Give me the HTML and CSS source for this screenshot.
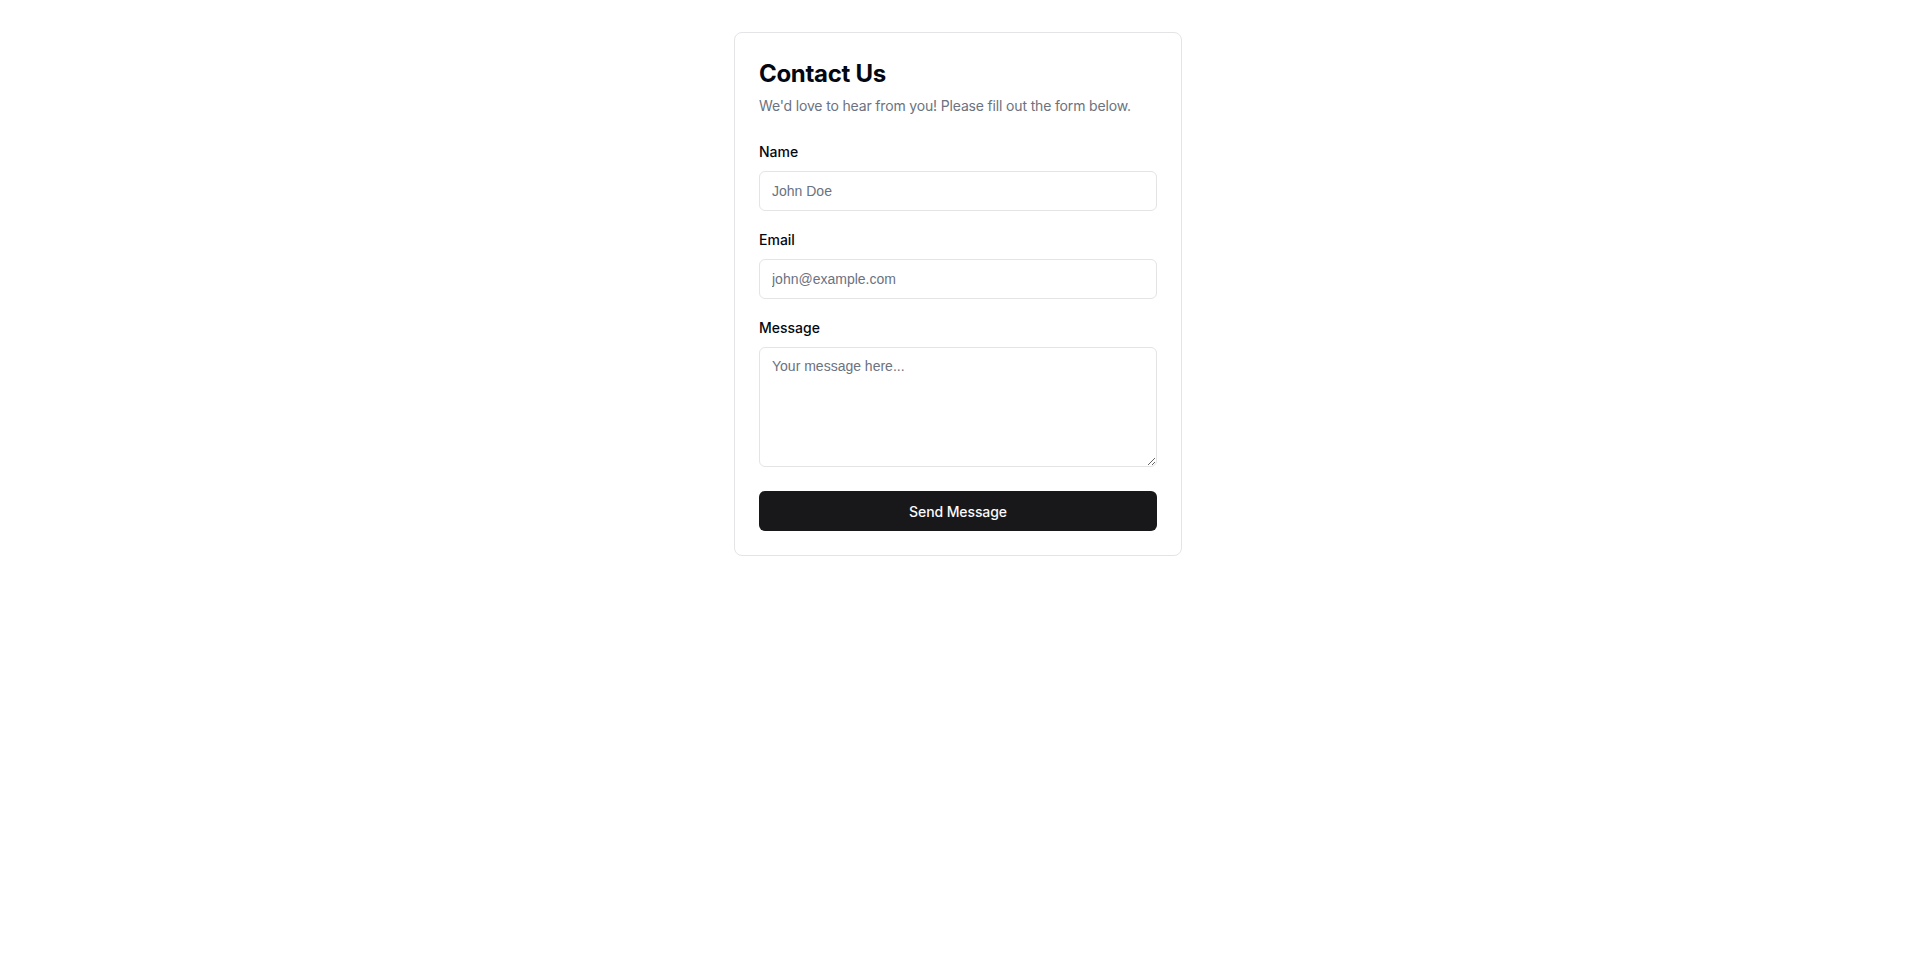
FILE: index.html
```html
<!DOCTYPE html>
<html lang="en">
<head>
<meta charset="utf-8">
<title>Contact Us</title>
<link rel="stylesheet" href="styles.css">
</head>
<body>
<main class="page">
  <section class="card">
    <header class="card-header">
      <h1 class="title">Contact Us</h1>
      <p class="subtitle">We'd love to hear from you! Please fill out the form below.</p>
    </header>
    <form class="form">
      <div class="field">
        <label class="label" for="name">Name</label>
        <input class="input" id="name" type="text" placeholder="John Doe">
      </div>
      <div class="field">
        <label class="label" for="email">Email</label>
        <input class="input" id="email" type="email" placeholder="john@example.com">
      </div>
      <div class="field">
        <label class="label" for="message">Message</label>
        <textarea class="input textarea" id="message" placeholder="Your message here..."></textarea>
      </div>
      <button class="button" type="button">Send Message</button>
    </form>
  </section>
</main>
</body>
</html>
```
FILE: styles.css
```css
* { box-sizing: border-box; }
html, body { margin: 0; padding: 0; background: #ffffff; }
body { font-family: Inter, "Liberation Sans", sans-serif; color: #09090b; }
.page { padding: 32px 2px 0 0; display: flex; justify-content: center; }
.card {
  width: 448px;
  border: 1px solid #e4e4e7;
  border-radius: 8px;
  padding: 24px;
  background: #fff;
}
.card-header { display: flex; flex-direction: column; gap: 6px; padding-top: 1px; }
.title { margin: 0; font-size: 24px; line-height: 32px; font-weight: 700; letter-spacing: -0.3px; color: #030712; }
.subtitle { margin: 0; font-size: 14px; line-height: 20px; color: #6b7280; letter-spacing: -0.16px; }
.form { margin-top: 23px; display: flex; flex-direction: column; gap: 16px; }
.field { display: flex; flex-direction: column; gap: 8px; }
.label { font-size: 14px; line-height: 22px; padding-top: 2px; font-weight: 500; color: #030712; }
.input {
  display: block;
  height: 40px;
  width: 100%;
  border: 1px solid #e4e4e7;
  border-radius: 6px;
  padding: 8px 12px;
  font-family: "Liberation Sans", Arial, sans-serif;
  font-size: 14px;
  color: #09090b;
  background: #fff;
  outline: none;
}
.input::placeholder { color: #6b7280; }
.textarea { height: 120px; resize: vertical; padding-top: 10px; }
.button {
  margin-top: 8px;
  height: 40px;
  width: 100%;
  border: none;
  border-radius: 6px;
  background: #18181b;
  color: #fafafa;
  font-family: Inter, "Liberation Sans", sans-serif;
  font-size: 14px;
  font-weight: 500;
  letter-spacing: -0.1px;
}
```
